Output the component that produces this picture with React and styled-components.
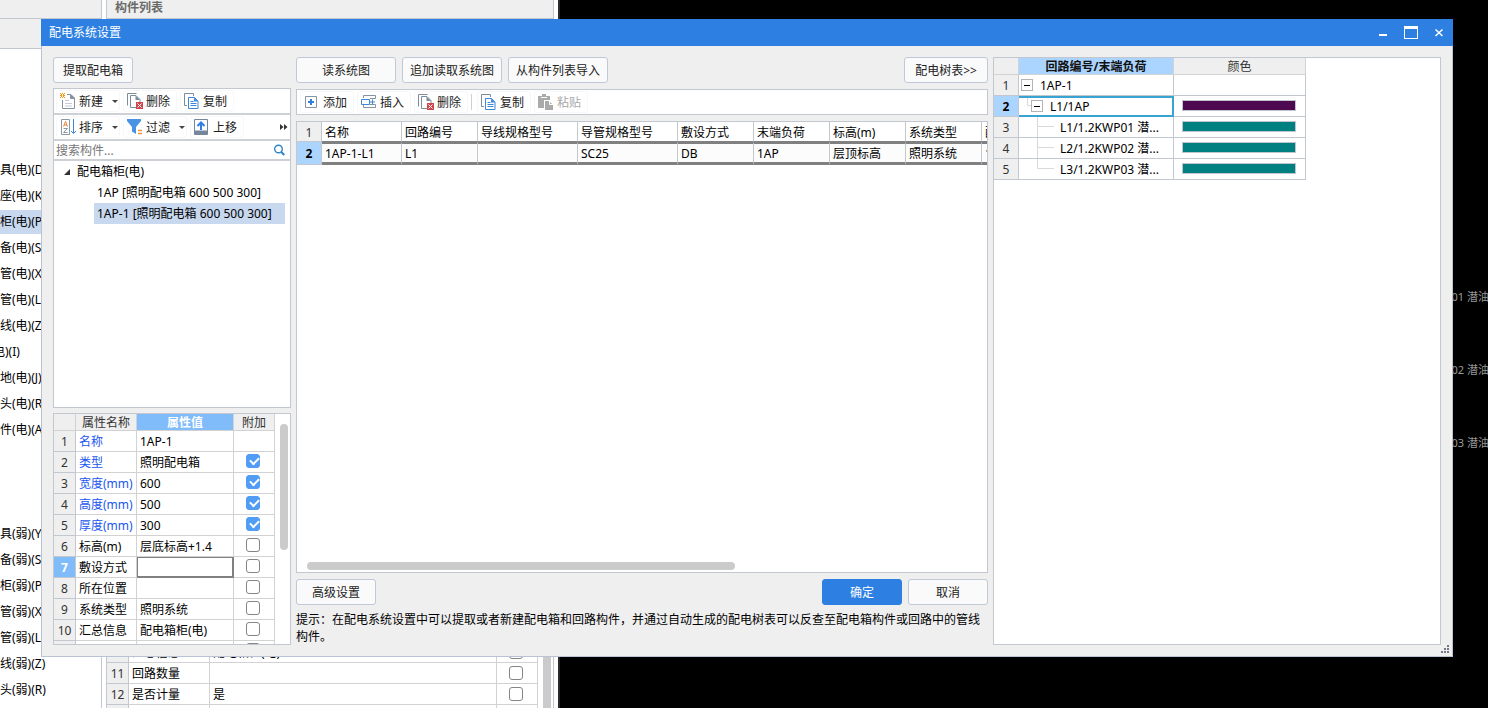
import React, { useState } from "react";
import styled, { createGlobalStyle, css } from "styled-components";

const c = {
  line: "#c3c7cf",
  grid: "#d2d2d4",
  face: "#efefef",
  blue: "#2d7fe2",
  pick: "#c7d8ef",
  thick: "#808080",
};

const Global = createGlobalStyle`
  * { box-sizing: border-box; }
  html, body, #root { height: 100%; }
  body {
    margin: 0;
    overflow: hidden;
    background: #000;
    color: #000;
    font: 12px/16px "Noto Sans", "Noto Sans CJK SC", sans-serif;
  }
  button, input { font: inherit; color: inherit; }
  svg { display: block; flex: none; }
`;

/* ---------- main window behind the dialog ---------- */

const Screen = styled.div`
  position: relative;
  height: 100%;
  overflow: hidden;
`;

const Workspace = styled.div`
  display: flex;
  height: 100%;
  background: #fff;
`;

const NavPane = styled.nav`
  flex: none;
  display: flex;
  flex-direction: column;
  width: 102px;
  margin-right: 4px;
  border-right: 1px solid ${c.line};
  overflow: hidden;
`;

const NavBar = styled.div`
  flex: none;
  height: ${(p) => p.$h}px;
  background: ${c.face};
  border-bottom: 1px solid ${c.line};
`;

const NavList = styled.ul`
  flex: none;
  display: flex;
  flex-direction: column;
  gap: 2px;
  margin: 0;
  padding: ${(p) => p.$top}px 0 0;
  list-style: none;
`;

const NavItem = styled.li`
  height: 24px;
  line-height: 24px;
  white-space: nowrap;
  text-indent: ${(p) => (p.$cut ? -7 : 0)}px;
  background: ${(p) => (p.$on ? c.pick : "transparent")};
`;

const ListPane = styled.section`
  flex: none;
  display: flex;
  flex-direction: column;
  justify-content: space-between;
  width: 448px;
  border: solid ${c.line};
  border-width: 0 1px;
`;

const PaneTitle = styled.h2`
  margin: 0;
  height: 19px;
  padding-left: 8px;
  border-bottom: 1px solid ${c.line};
  background: ${c.face};
  color: #6b6b6b;
  font-size: 12px;
  line-height: 16px;
`;

const PaneTail = styled.div`
  display: flex;
  gap: 5px;
  height: 66px;
  overflow: hidden;
`;

const TailScroll = styled.div`
  flex: none;
  width: 8px;
  background: #cbcbcb;
`;

const Canvas = styled.div`
  position: relative;
  flex: 1;
  margin-left: 4px;
  border-left: 2px solid #2a2a2e;
  background: #000;
`;

const CadText = styled.span`
  position: absolute;
  right: -12px;
  top: ${(p) => p.$y}px;
  color: #9a9a9a;
  font-size: 11px;
  white-space: nowrap;
`;

/* ---------- dialog frame ---------- */

const Dialog = styled.div`
  position: absolute;
  inset: 19px 35px 51px 41px;
  display: flex;
  flex-direction: column;
`;

const TitleBar = styled.header`
  flex: none;
  display: flex;
  align-items: center;
  height: 27px;
  padding-left: 8px;
  background: ${c.blue};
  color: #fff;
`;

const DialogTitle = styled.h1`
  flex: 1;
  margin: 0;
  font-size: 12px;
  font-weight: 400;
`;

const WinButton = styled.button`
  display: grid;
  place-items: center;
  width: 28px;
  height: 27px;
  padding: 0;
  border: 0;
  background: none;
`;

const Body = styled.div`
  flex: 1;
  min-height: 0;
  display: grid;
  grid-template-columns: 238px minmax(0, 692fr) minmax(0, 448fr);
  grid-template-rows: minmax(0, 1fr);
  gap: 5px;
  padding: 11px;
  border: 1px solid #b9c3d3;
  border-top: 0;
  background: ${c.face};
`;

const Column = styled.div`
  display: flex;
  flex-direction: column;
  gap: ${(p) => p.$gap}px;
  min-width: 0;
`;

const Grip = styled.svg`
  position: absolute;
  right: 3px;
  bottom: 3px;
`;

const ButtonRow = styled.div`
  flex: none;
  display: flex;
  gap: 6px;
`;

const PushButton = styled.button`
  width: ${(p) => p.$w}px;
  height: 26px;
  padding: 2px 0 0;
  border: 1px solid ${(p) => (p.$primary ? c.blue : "#c0c9d8")};
  border-radius: 3px;
  background: ${(p) => (p.$primary ? c.blue : "#fafafa")};
  color: ${(p) => (p.$primary ? "#fff" : "#222")};
  margin-left: ${(p) => (p.$push ? "auto" : 0)};
  white-space: nowrap;
`;

const Panel = styled.div`
  flex: ${(p) => p.$grow || 1} 1 0;
  min-height: 0;
  display: flex;
  flex-direction: column;
  border: 1px solid ${c.line};
  background: #fff;
  overflow: hidden;
`;

/* ---------- toolbars ---------- */

const Toolbar = styled.div`
  flex: none;
  display: flex;
  align-items: center;
  gap: 3px;
  height: 26px;
  padding: 0 2px;
  background: #fff;
  border-bottom: 2px solid #cdd0d4;
  ${(p) =>
    p.$boxed &&
    css`
      padding: 0 3px;
      border: 1px solid ${c.line};
    `}
`;

const ToolButton = styled.button`
  display: flex;
  align-items: center;
  gap: 3px;
  height: 22px;
  padding: 0 ${(p) => (p.$menu ? 1 : 6)}px 0 3px;
  border: 1px solid #f8f8f8;
  border-radius: 3px;
  background: none;
  color: #222;
  white-space: nowrap;
  &:disabled { color: #a8a8a8; }
`;

const Label = styled.span`
  padding-top: 2px;
`;

const Caret = styled.span`
  margin-left: 6px;
  border: 3px solid transparent;
  border-top-color: #444;
  border-bottom: 0;
`;

const Divider = styled.span`
  width: 1px;
  height: 16px;
  margin-right: 2px;
  background: #cfcfcf;
`;

const MoreButton = styled.button`
  margin-left: auto;
  padding: 0;
  border: 0;
  background: none;
`;

const SearchRow = styled.label`
  flex: none;
  display: flex;
  align-items: center;
  height: 20px;
  padding: 0 4px 0 2px;
  border-bottom: 2px solid #cdd0d4;
`;

const SearchInput = styled.input`
  flex: 1;
  min-width: 0;
  height: 18px;
  padding: 0;
  border: 0;
  outline: 0;
  background: none;
  &::placeholder { color: #777; opacity: 1; }
`;

/* ---------- box tree ---------- */

const Tree = styled.ul`
  margin: 0;
  padding: 0 5px 0 9px;
  list-style: none;
  line-height: 21px;
  white-space: nowrap;
`;

const TreeHead = styled.div`
  display: flex;
  align-items: center;
  gap: 6px;
`;

const Branch = styled.ul`
  margin: 0;
  padding: 0 0 0 31px;
  list-style: none;
`;

const Leaf = styled.li`
  height: 21px;
  padding-left: 3px;
  background: ${(p) => (p.$on ? c.pick : "transparent")};
`;

/* ---------- tables ---------- */

const Table = styled.table`
  flex: none;
  table-layout: fixed;
  width: ${(p) => p.$w}px;
  border-collapse: separate;
  border-spacing: 0;
  align-self: flex-start;
`;

const Cell = styled.td`
  height: 21px;
  padding: 2px 3px 0;
  border: solid ${c.grid};
  border-width: 0 1px 1px 0;
  color: ${(p) => (p.$link ? "#1a56f0" : "#000")};
  white-space: nowrap;
  overflow: hidden;
  ${(p) =>
    p.$editing &&
    css`
      box-shadow: inset 1px 1px 0 ${c.thick}, inset -1px -1px 0 ${c.thick};
      border-color: ${c.thick};
    `}
`;

const HeadCell = styled.th`
  height: 17px;
  padding: 1px 0 0;
  border: solid ${c.grid};
  border-width: 0 1px 1px 0;
  background: ${(p) => p.$bg || c.face};
  color: ${(p) => p.$ink || "#333"};
  font-weight: ${(p) => (p.$bold ? 700 : 400)};
  line-height: 15px;
  text-align: center;
  white-space: nowrap;
  overflow: hidden;
`;

const NumCell = styled.th`
  padding: 2px 0 0;
  border: solid ${c.line};
  border-width: 0 1px 1px 0;
  background: ${(p) => p.$bg || c.face};
  color: ${(p) => p.$ink || "#333"};
  font-weight: ${(p) => (p.$bg ? 700 : 400)};
  text-align: center;
`;

const Check = styled.input.attrs({ type: "checkbox" })`
  appearance: none;
  position: relative;
  display: block;
  width: 14px;
  height: 14px;
  margin: 0 auto 3px 9px;
  border: 1px solid #858585;
  border-radius: 3px;
  background: #fff;
  &:checked {
    border-color: #519cf5;
    background: #519cf5;
  }
  &:checked::after {
    content: "";
    position: absolute;
    left: 3px;
    top: 2px;
    width: 7px;
    height: 4px;
    border: solid #fff;
    border-width: 0 0 2px 2px;
    transform: rotate(-45deg);
  }
`;

const PropsBody = styled.div`
  display: flex;
  align-items: flex-start;
  gap: 5px;
`;

const VScroll = styled.div`
  width: 8px;
  height: 126px;
  margin-top: 10px;
  border-radius: 4px;
  background: #cbcbcb;
`;

const HScroll = styled.div`
  width: 62%;
  height: 8px;
  margin: auto 10px 2px;
  border-radius: 4px;
  background: #cbcbcb;
`;

const CircuitCell = styled.td`
  height: ${(p) => (p.$on ? 23 : 20)}px;
  padding: 2px 3px 0;
  border: solid ${c.line};
  border-width: 0 1px 1px 0;
  border-bottom-color: ${c.thick};
  white-space: nowrap;
  ${(p) =>
    p.$on &&
    css`
      border-top: 2px solid ${c.thick};
      border-bottom-width: 3px;
      background: #fcfcfc;
    `}
`;

const Hint = styled.p`
  flex: none;
  height: 34px;
  margin: 0;
  line-height: 17px;
`;

/* ---------- colour tree ---------- */

const NodeCell = styled.td`
  height: 21px;
  padding: 0;
  border: solid ${c.line};
  border-width: 0 1px 1px 0;
  ${(p) =>
    p.$on &&
    css`
      border-color: #39a4d2;
      box-shadow: inset 0 2px 0 #39a4d2, inset -1px -1px 0 #39a4d2;
    `}
`;

const Node = styled.div`
  display: flex;
  align-items: center;
  height: 20px;
  padding-left: ${(p) => p.$indent}px;
  white-space: nowrap;
`;

const Toggle = styled.button`
  display: grid;
  place-items: center;
  width: 12px;
  height: 12px;
  margin-right: 7px;
  padding: 0;
  border: 1px solid #b4b4b4;
  background: #fff;
  &::before {
    content: "";
    width: 6px;
    height: 1px;
    background: #000;
  }
`;

const SwatchCell = styled.td`
  height: 21px;
  padding: 0 9px 0 8px;
  border: solid ${c.line};
  border-width: 0 1px 1px 0;
`;

const Swatch = styled.div`
  height: 11px;
  margin-bottom: 1px;
  border: 1px solid #c0c4cc;
  background: ${(p) => p.$color};
`;

/* ---------- icons ---------- */

const Svg = (p) => (
  <svg width="16" height="16" viewBox="0 0 16 16" fill="none" aria-hidden="true" {...p} />
);

const NewIcon = () => (
  <Svg>
    <path d="M7 1.500h4l3.500 3.500v10.500h-12V7" stroke="#8593a3" />
    <path d="M10.500 1.500v4h4z" fill="#8593a3" stroke="#8593a3" />
    <path d="M5 7.500h4M5 10.500h7M5 13h7" stroke="#c9c9da" />
    <path d="M0 0h1v1H0zM2 0h1v1H2zM4 0h1v1H4zM1 1h1v1H1zM3 1h1v1H3zM0 2h2v1H0zM3 2h2v1H3zM1 3h1v1H1zM3 3h1v1H3zM0 4h1v1H0zM2 4h1v1H2zM4 4h1v1H4z" fill="#f0920a" />
  </Svg>
);

const DeleteIcon = () => (
  <Svg>
    <path d="M.5 12.500V.5h9" stroke="#7d8c9a" />
    <path d="M9 14.500H3.500v-12H9l4 4V9" stroke="#7d8c9a" />
    <path d="M8.500 2.500l4.500 4.500h-4.500z" fill="#7d8c9a" />
    <rect x="9" y="9" width="7" height="7" fill="#d0454b" />
    <path d="M10.500 10.500l4 4m0-4l-4 4" stroke="#fff" />
  </Svg>
);

const CopyIcon = () => (
  <Svg>
    <path d="M3 12.500H.5V.5h9V3" stroke="#7d8c9a" />
    <path d="M4.500 4.500h6l3.500 3.500v7.500H4.500z" fill="#fff" stroke="#3d86d8" />
    <path d="M10 4.500l4 4h-4z" fill="#3d86d8" />
    <path d="M6.500 8.500h3M6.500 10.500h6M6.500 12.500h6" stroke="#3d86d8" />
  </Svg>
);

const SortIcon = () => (
  <Svg>
    <path d="M1.500 .5h8v15h-8z" stroke="#8a98a5" />
    <path d="M3.500 7.500l2-5 2 5M4 6h3" stroke="#ee8030" />
    <path d="M3.500 9.500h4l-4 4h4" stroke="#8a98a5" />
    <path d="M13.500 0v14M11 12l2.500 2.500L16 12" stroke="#3d86d8" />
  </Svg>
);

const FilterIcon = () => (
  <Svg>
    <path d="M0 0h14v2L9 8v7l-4-2.500V8L0 2z" fill="#4a93e2" />
    <path d="M11 11.500h4M11 14.500h4" stroke="#f0943a" strokeWidth="1.500" />
  </Svg>
);

const UpIcon = () => (
  <Svg>
    <path d="M.5 .5h13v15H.5z" fill="#fff" stroke="#75859a" />
    <path d="M1 11.500h12V15H1z" fill="#75859a" />
    <path d="M7 11V4M3.500 7L7 3.500 10.500 7" stroke="#2d7fe2" strokeWidth="2" />
  </Svg>
);

const AddIcon = () => (
  <Svg>
    <path d="M1.500 2.500h11v11h-11z" stroke="#8593a3" />
    <path d="M7 5v6M4 8h6" stroke="#2d7fe2" strokeWidth="2" />
  </Svg>
);

const InsertIcon = () => (
  <Svg>
    <path d="M2.500 4V1.500h12V4.500H9M2.500 11v2.500h12V10.500H9" stroke="#8593a3" />
    <path d="M.5 5.500h8v5h-8zM9 8h5M11.500 5.500v5" stroke="#3d86d8" />
  </Svg>
);

const PasteIcon = () => (
  <Svg>
    <path d="M0 2h4V0h4v2h4v4H6v8H0z" fill="#aaa" />
    <path d="M3 3.500h6" stroke="#fff" />
    <path d="M7 7h4l4 4v5H7z" fill="#aaa" />
    <path d="M11.500 7v3.500H15" stroke="#fff" />
  </Svg>
);

const SearchIcon = () => (
  <svg width="14" height="14" viewBox="0 0 14 14" fill="none" aria-hidden="true">
    <circle cx="6.500" cy="6" r="3.800" stroke="#2f86c8" strokeWidth="1.400" />
    <path d="M9.300 9l3 3" stroke="#2f86c8" strokeWidth="2" />
  </svg>
);

/* One svg per row: elbow or tee lines that join a node to its parent. */
const Guide = ({ d, w }) => (
  <svg width={w} height="20" viewBox={`0 0 ${w} 20`} fill="none" aria-hidden="true">
    <path d={d} stroke="#d9d9d9" />
  </svg>
);

/* ---------- data ---------- */

const strongItems = ["具(电)(D)", "座(电)(K)", "柜(电)(P)", "备(电)(S)", "管(电)(X)", "管(电)(L)", "线(电)(Z)", "电)(I)", "地(电)(J)", "头(电)(R)", "件(电)(A)"];
const weakItems = ["具(弱)(Y)", "备(弱)(S)", "柜(弱)(P)", "管(弱)(X)", "管(弱)(L)", "线(弱)(Z)", "头(弱)(R)"];

const properties = [
  ["名称", "1AP-1", null, true],
  ["类型", "照明配电箱", true, true],
  ["宽度(mm)", "600", true, true],
  ["高度(mm)", "500", true, true],
  ["厚度(mm)", "300", true, true],
  ["标高(m)", "层底标高+1.4", false],
  ["敷设方式", "", false],
  ["所在位置", "", false],
  ["系统类型", "照明系统", false],
  ["汇总信息", "配电箱柜(电)", false],
];

const circuitCols = [25, 80, 76, 100, 100, 76, 76, 76, 76, 76];
const circuitHead = ["名称", "回路编号", "导线规格型号", "导管规格型号", "敷设方式", "末端负荷", "标高(m)", "系统类型", "配电箱"];
const circuitRow = ["1AP-1-L1", "L1", "", "SC25", "DB", "1AP", "层顶标高", "照明系统", "1AP-1"];

const loads = ["L1/1.2KWP01 潜...", "L2/1.2KWP02 潜...", "L3/1.2KWP03 潜..."];

const tailRows = [
  ["10", "汇总信息", "配电箱柜(电)"],
  ["11", "回路数量", ""],
  ["12", "是否计量", "是"],
  ["", "", ""],
];

/* ---------- parts ---------- */

const Tool = ({ icon, label, menu, disabled }) => (
  <ToolButton type="button" $menu={menu} disabled={disabled}>
    {icon}
    <Label>{label}</Label>
    {menu && <Caret />}
  </ToolButton>
);

const Cols = ({ widths }) => (
  <colgroup>
    {widths.map((w, i) => (
      <col key={i} width={w} />
    ))}
  </colgroup>
);

function Background() {
  return (
    <Workspace>
      <NavPane>
        <NavBar $h={19} />
        <NavBar $h={30} />
        <NavList $top={109}>
          {strongItems.map((t, i) => (
            <NavItem key={i} $on={i === 2} $cut={i === 7}>{t}</NavItem>
          ))}
        </NavList>
        <NavList $top={80}>
          {weakItems.map((t, i) => (
            <NavItem key={i}>{t}</NavItem>
          ))}
        </NavList>
      </NavPane>
      <ListPane>
        <PaneTitle>构件列表</PaneTitle>
        <PaneTail>
          <Table $w={431}>
            <Cols widths={[22, 81, 287, 41]} />
            <tbody>
              {tailRows.map(([n, name, value], i) => (
                <tr key={i}>
                  <NumCell scope="row">{n}</NumCell>
                  <Cell>{name}</Cell>
                  <Cell>{value}</Cell>
                  <Cell><Check aria-label={`附加 ${name}`} /></Cell>
                </tr>
              ))}
            </tbody>
          </Table>
          <TailScroll />
        </PaneTail>
      </ListPane>
      <Canvas>
        <CadText $y={289}>01 潜油泵</CadText>
        <CadText $y={362}>02 潜油泵</CadText>
        <CadText $y={435}>03 潜油泵</CadText>
      </Canvas>
    </Workspace>
  );
}

function PropertyTable() {
  const [checks, setChecks] = useState(properties.map((p) => p[2]));
  const flip = (i) => setChecks(checks.map((v, k) => (k === i ? !v : v)));
  return (
    <PropsBody>
      <Table $w={221}>
        <Cols widths={[22, 61, 97, 41]} />
        <thead>
          <tr>
            <HeadCell />
            <HeadCell>属性名称</HeadCell>
            <HeadCell $bg="#80bbfa" $ink="#fff" $bold>属性值</HeadCell>
            <HeadCell>附加</HeadCell>
          </tr>
        </thead>
        <tbody>
          {properties.map(([name, value, , link], i) => (
            <tr key={name}>
              <NumCell scope="row" $bg={i === 6 ? "#80bbfa" : undefined} $ink={i === 6 ? "#fff" : undefined}>{i + 1}</NumCell>
              <Cell $link={link}>{name}</Cell>
              <Cell $editing={i === 6}>{value}</Cell>
              <Cell>
                {checks[i] !== null && (
                  <Check aria-label={`附加 ${name}`} checked={checks[i]} onChange={() => flip(i)} />
                )}
              </Cell>
            </tr>
          ))}
          <tr>
            <NumCell />
            <Cell />
            <Cell />
            <Cell><Check aria-label="附加" /></Cell>
          </tr>
        </tbody>
      </Table>
      <VScroll />
    </PropsBody>
  );
}

function CircuitTable() {
  return (
    <Table $w={761}>
      <Cols widths={circuitCols} />
      <tbody>
        <tr>
          <NumCell scope="row">1</NumCell>
          {circuitHead.map((t) => <CircuitCell key={t}>{t}</CircuitCell>)}
        </tr>
        <tr>
          <NumCell scope="row" $bg="#abd4ff" $ink="#000">2</NumCell>
          {circuitRow.map((t, i) => <CircuitCell key={i} $on>{t}</CircuitCell>)}
        </tr>
      </tbody>
    </Table>
  );
}

function ColorTable() {
  return (
    <Table $w={312}>
      <Cols widths={[25, 155, 132]} />
      <thead>
        <tr>
          <HeadCell />
          <HeadCell $bg="#abd4ff" $ink="#111" $bold>回路编号/末端负荷</HeadCell>
          <HeadCell>颜色</HeadCell>
        </tr>
      </thead>
      <tbody>
        <tr>
          <NumCell scope="row">1</NumCell>
          <NodeCell>
            <Node $indent={2}>
              <Toggle type="button" aria-label="折叠 1AP-1" />
              <Label>1AP-1</Label>
            </Node>
          </NodeCell>
          <SwatchCell />
        </tr>
        <tr>
          <NumCell scope="row" $bg="#abd4ff" $ink="#000">2</NumCell>
          <NodeCell $on>
            <Node $indent={8}>
              <Guide w={4} d="M.5 2v7.500H4" />
              <Toggle type="button" aria-label="折叠 L1/1AP" />
              <Label>L1/1AP</Label>
            </Node>
          </NodeCell>
          <SwatchCell><Swatch $color="#4d0a50" /></SwatchCell>
        </tr>
        {loads.map((t, i) => (
          <tr key={t}>
            <NumCell scope="row">{i + 3}</NumCell>
            <NodeCell>
              <Node $indent={18}>
                <Guide w={23} d={i === 2 ? "M.5 0v9.500H17" : "M.5 0v20M.5 9.500H17"} />
                <Label>{t}</Label>
              </Node>
            </NodeCell>
            <SwatchCell><Swatch $color="#008080" /></SwatchCell>
          </tr>
        ))}
      </tbody>
    </Table>
  );
}

export default function App() {
  return (
    <Screen>
      <Global />
      <Background />
      <Dialog role="dialog" aria-labelledby="dialog-title">
        <TitleBar>
          <DialogTitle id="dialog-title">配电系统设置</DialogTitle>
          <WinButton type="button" aria-label="最小化">
            <svg width="14" height="14" viewBox="0 0 14 14"><path d="M3 8h8v2H3z" fill="#fff" /></svg>
          </WinButton>
          <WinButton type="button" aria-label="最大化">
            <svg width="14" height="14" viewBox="0 0 14 14"><path fillRule="evenodd" d="M0 0h14v13H0zM1 3v9h12V3z" fill="#fff" /></svg>
          </WinButton>
          <WinButton type="button" aria-label="关闭">
            <svg width="14" height="14" viewBox="0 0 14 14"><path d="M3.500 3.500l7 6.500m0-6.500l-7 6.500" stroke="#fff" strokeWidth="1.500" /></svg>
          </WinButton>
        </TitleBar>
        <Body>
          <Column $gap={5}>
            <ButtonRow>
              <PushButton type="button" $w={80}>提取配电箱</PushButton>
            </ButtonRow>
            <Panel $grow={320}>
              <Toolbar>
                <Tool icon={<NewIcon />} label="新建" menu />
                <Tool icon={<DeleteIcon />} label="删除" />
                <Tool icon={<CopyIcon />} label="复制" />
              </Toolbar>
              <Toolbar>
                <Tool icon={<SortIcon />} label="排序" menu />
                <Tool icon={<FilterIcon />} label="过滤" menu />
                <Tool icon={<UpIcon />} label="上移" />
                <MoreButton type="button" aria-label="更多">
                  <svg width="8" height="6" viewBox="0 0 8 6"><path d="M0 0l3.500 3L0 6zM4 0l3.500 3L4 6z" fill="#333" /></svg>
                </MoreButton>
              </Toolbar>
              <SearchRow>
                <SearchInput type="text" placeholder="搜索构件..." aria-label="搜索构件" />
                <SearchIcon />
              </SearchRow>
              <Tree>
                <li>
                  <TreeHead>
                    <svg width="8" height="8" viewBox="0 0 8 8"><path d="M7 1v6H1z" fill="#333" /></svg>
                    配电箱柜(电)
                  </TreeHead>
                  <Branch>
                    <Leaf>1AP [照明配电箱 600 500 300]</Leaf>
                    <Leaf $on>1AP-1 [照明配电箱 600 500 300]</Leaf>
                  </Branch>
                </li>
              </Tree>
            </Panel>
            <Panel $grow={232}>
              <PropertyTable />
            </Panel>
          </Column>
          <Column $gap={6}>
            <ButtonRow>
              <PushButton type="button" $w={100}>读系统图</PushButton>
              <PushButton type="button" $w={100}>追加读取系统图</PushButton>
              <PushButton type="button" $w={100}>从构件列表导入</PushButton>
              <PushButton type="button" $w={84} $push>配电树表&gt;&gt;</PushButton>
            </ButtonRow>
            <Toolbar $boxed>
              <Tool icon={<AddIcon />} label="添加" />
              <Tool icon={<InsertIcon />} label="插入" />
              <Tool icon={<DeleteIcon />} label="删除" />
              <Divider />
              <Tool icon={<CopyIcon />} label="复制" />
              <Tool icon={<PasteIcon />} label="粘贴" disabled />
            </Toolbar>
            <Panel>
              <CircuitTable />
              <HScroll />
            </Panel>
            <ButtonRow>
              <PushButton type="button" $w={80}>高级设置</PushButton>
              <PushButton type="button" $w={80} $primary $push>确定</PushButton>
              <PushButton type="button" $w={80}>取消</PushButton>
            </ButtonRow>
            <Hint>提示：在配电系统设置中可以提取或者新建配电箱和回路构件，并通过自动生成的配电树表可以反查至配电箱构件或回路中的管线构件。</Hint>
          </Column>
          <Panel>
            <ColorTable />
          </Panel>
        </Body>
        <Grip width="9" height="9" viewBox="0 0 9 9" aria-hidden="true">
          <path d="M6 0h2v2H6zM3 3h2v2H3zM6 3h2v2H6zM0 6h2v2H0zM3 6h2v2H3zM6 6h2v2H6z" fill="#74788a" />
        </Grip>
      </Dialog>
    </Screen>
  );
}
